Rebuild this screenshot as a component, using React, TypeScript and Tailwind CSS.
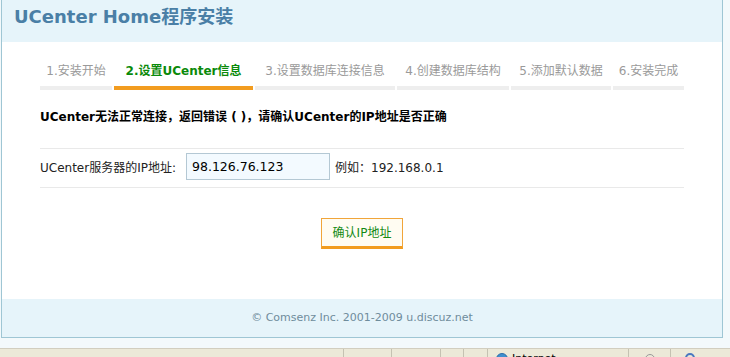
const STEPS = [
  { label: '1.安装开始', w: 'w-[72px]' },
  { label: '2.设置UCenter信息', w: 'w-[139px]', active: true },
  { label: '3.设置数据库连接信息', w: 'w-[140px]' },
  { label: '4.创建数据库结构', w: 'w-[112px]' },
  { label: '5.添加默认数据', w: 'w-[100px]' },
  { label: '6.安装完成', w: 'w-[71px]' },
];

const FONT = "font-['DejaVu_Sans','Noto_Sans_CJK_SC',sans-serif]";

function StatusBar() {
  return (
    <div className="h-[22px] shrink-0 border-t border-[#d2cebf] bg-[#ece9d8] flex text-[11px] text-black">
      <div className="w-[344px] border-r border-[#c5c2b2]" />
      <div className="w-[48px] border-r border-[#c5c2b2]" />
      <div className="w-[49px] border-r border-[#c5c2b2]" />
      <div className="w-[23px] border-r border-[#c5c2b2]" />
      <div className="w-[24px] border-r border-[#c5c2b2]" />
      <div className="w-[141px] border-r border-[#c5c2b2] flex items-start gap-[4px] pl-[8px] pt-[4px]">
        <span className="w-[12px] h-[12px] rounded-full bg-[#3f8fcf] border border-[#2c6ea8] inline-block" />
        <span className="leading-[12px]">Internet</span>
      </div>
      <div className="w-[42px] border-r border-[#c5c2b2] flex justify-center pt-[5px]">
        <span className="w-[10px] h-[10px] rounded-full border border-[#999]" />
      </div>
      <div className="flex-1 flex pl-[14px] pt-[4px]">
        <span className="w-[10px] h-[10px] rounded-full border-2 border-[#4a78c0]" />
      </div>
    </div>
  );
}

export default function App() {
  return (
    <div className={`${FONT} h-[357px] w-[730px] overflow-hidden bg-[#f3f9fb] flex flex-col`}>
      <div className="ml-px w-[722px] h-[338px] shrink-0 border-x border-b border-[#9fc6d4] bg-white flex flex-col">
        {/* header */}
        <div className="h-[42px] bg-[#e6f4fa] pl-[12px] pt-[6px]">
          <h1 className="text-[18px] leading-[22px] font-bold text-[#4a7fa6]">UCenter Home程序安装</h1>
        </div>

        {/* body */}
        <div className="flex-1 px-[38px] pt-[18px] text-[12px]">
          <div className="flex gap-[2px]">
            {STEPS.map((s) => (
              <div
                key={s.label}
                className={`${s.w} text-center leading-[20px] pt-[1px] pb-[5px] border-b-4 ${
                  s.active ? 'border-[#f29c1f] text-[#0a8a0a] font-bold' : 'border-[#eeeeee] text-[#9a9a9a]'
                }`}
              >
                {s.label}
              </div>
            ))}
          </div>

          <p className="mt-[19px] leading-[16px] font-bold text-black">
            UCenter无法正常连接，返回错误 ( )，请确认UCenter的IP地址是否正确
          </p>

          <div className="mt-[23px] h-[40px] border-y border-[#e9e9e9] flex items-center text-[#222]">
            <span className="w-[146px]">UCenter服务器的IP地址:</span>
            <input
              defaultValue="98.126.76.123"
              className="w-[144px] h-[27px] mt-[-4px] border border-[#b4c8d4] bg-[#f3faff] px-[5px] text-[12.5px] text-black outline-none"
            />
            <span className="ml-[5px]">例如：192.168.0.1</span>
          </div>

          <div className="mt-[30px] flex justify-center">
            <button className="w-[82px] h-[31px] border border-[#f1a53a] border-b-[3px] border-b-[#f29c1f] bg-[#fffcf2] text-[#138a13] text-[12px]">
              确认IP地址
            </button>
          </div>
        </div>

        {/* footer */}
        <div className="h-[38px] bg-[#e6f4fa] flex items-center justify-center text-[11px] text-[#6f8c9c]">
          © Comsenz Inc. 2001-2009 u.discuz.net
        </div>
      </div>
      <div className="h-[10px] shrink-0" />
      <StatusBar />
    </div>
  );
}
